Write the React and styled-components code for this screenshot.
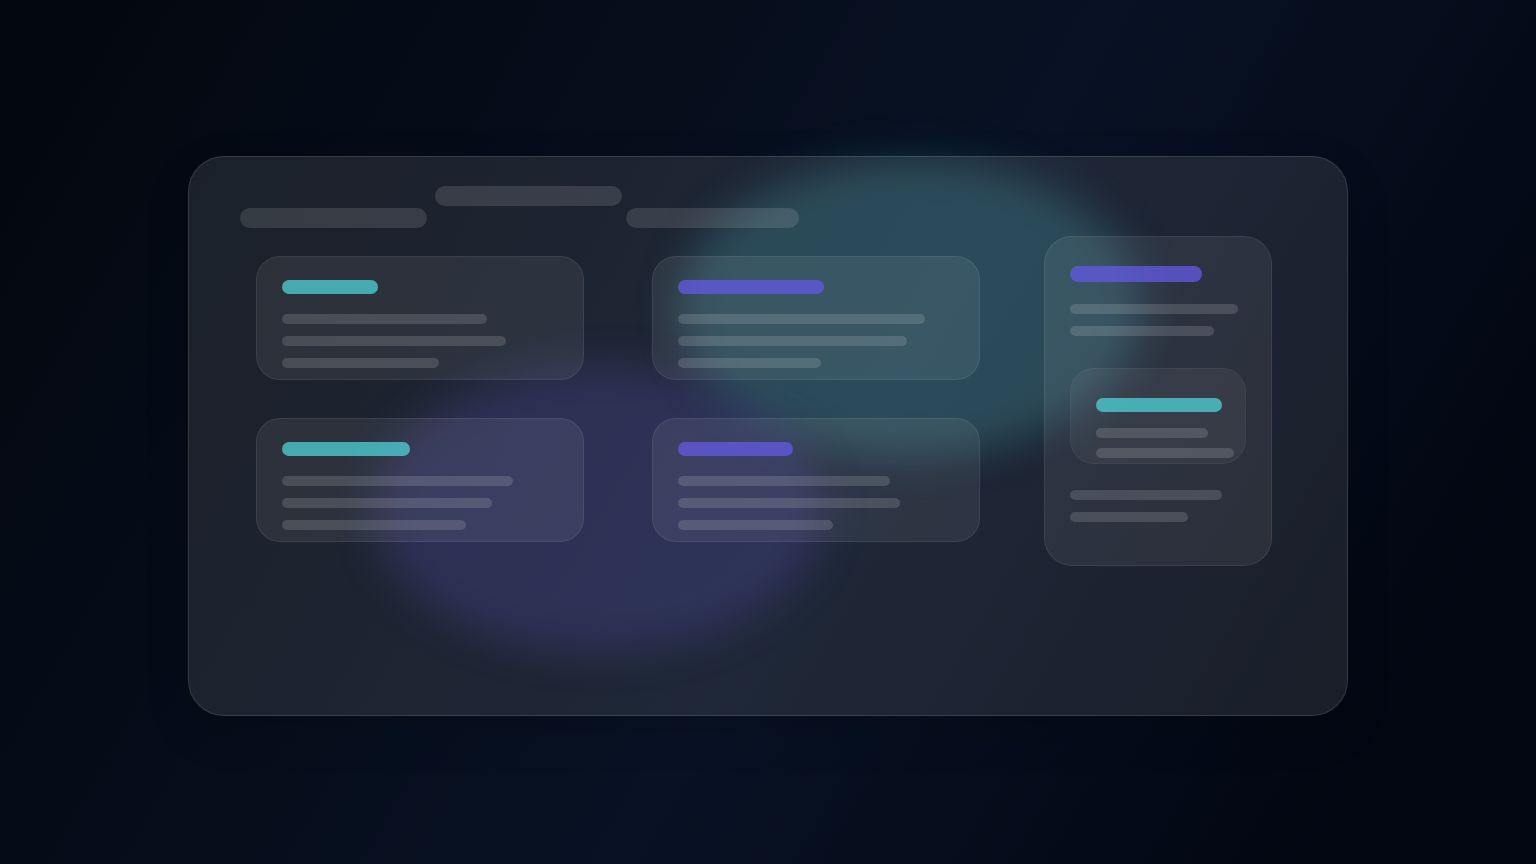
import React from 'react';
import styled, { createGlobalStyle } from 'styled-components';

const GlobalStyle = createGlobalStyle`
  * {
    box-sizing: border-box;
  }

  body {
    margin: 0;
    background: #020611;
  }
`;

const TEAL = 'rgba(78, 205, 210, 0.78)';
const INDIGO = 'rgba(99, 90, 228, 0.76)';

const Page = styled.main`
  position: relative;
  display: flex;
  justify-content: center;
  min-height: 100vh;
  padding: 156px 188px 148px;
  overflow: hidden;
  background: linear-gradient(120deg, #03070e 0%, #081224 55%, #020611 90%);
`;

const Glow = styled.div`
  position: absolute;
  border-radius: 50%;
  filter: blur(20px);
`;

const TealGlow = styled(Glow)`
  top: 160px;
  left: calc(50% - 90px);
  width: 464px;
  height: 296px;
  background: rgba(56, 150, 162, 0.3);
`;

const IndigoGlow = styled(Glow)`
  top: 366px;
  left: calc(50% - 396px);
  width: 452px;
  height: 286px;
  background: rgba(80, 72, 190, 0.24);
`;

const Shell = styled.section`
  position: relative;
  display: flex;
  justify-content: space-between;
  align-items: flex-start;
  flex: 1;
  max-width: 1160px;
  min-height: 560px;
  padding: 29px 75px 29px 51px;
  border: 1px solid rgba(255, 255, 255, 0.12);
  border-radius: 36px;
  background: rgba(255, 255, 255, 0.094);
  box-shadow: 0 16px 48px rgba(0, 0, 0, 0.12);
`;

const Content = styled.div`
  width: 740px;
`;

const Tabs = styled.nav`
  display: flex;
  height: 42px;
`;

const Tab = styled.span`
  width: ${props => props.$width}px;
  height: 20px;
  margin-right: ${props => props.$gap || 0}px;
  align-self: ${props => (props.$raised ? 'flex-start' : 'flex-end')};
  border-radius: 10px;
  background: rgba(255, 255, 255, 0.12);
`;

const Grid = styled.div`
  display: grid;
  grid-template-columns: 328px 328px;
  gap: 38px 68px;
  padding: 28px 0 0 16px;
`;

const Panel = styled.article`
  display: flex;
  flex-direction: column;
  align-items: flex-start;
  border: 1px solid rgba(255, 255, 255, 0.08);
  background: rgba(255, 255, 255, 0.07);
`;

const Card = styled(Panel)`
  gap: 12px;
  height: 124px;
  padding: 23px 25px;
  border-radius: 24px;
`;

const Sidebar = styled(Panel)`
  gap: 12px;
  width: 228px;
  height: 330px;
  margin-top: 50px;
  padding: 29px 25px;
  border-radius: 28px;
`;

const Inset = styled(Panel)`
  gap: 10px;
  width: 176px;
  height: 96px;
  margin: 20px 0 14px;
  padding: 29px 25px;
  border-color: rgba(255, 255, 255, 0.04);
  border-radius: 24px;
  background: rgba(255, 255, 255, 0.05);
`;

const Heading = styled.div`
  flex-shrink: 0;
  width: ${props => props.$width}px;
  height: ${props => (props.$large ? 16 : 14)}px;
  margin-bottom: ${props => props.$gap}px;
  border-radius: 8px;
  background: ${props => props.$color};
`;

const Line = styled.div`
  flex-shrink: 0;
  width: ${props => props.$width}px;
  height: 10px;
  border-radius: 5px;
  background: rgba(255, 255, 255, 0.14);
`;

const cards = [
  { color: TEAL, heading: 96, lines: [205, 224, 157] },
  { color: INDIGO, heading: 146, lines: [247, 229, 143] },
  { color: TEAL, heading: 128, lines: [231, 210, 184] },
  { color: INDIGO, heading: 115, lines: [212, 222, 155] },
];

const Lines = ({ widths }) =>
  widths.map((width, index) => <Line key={index} $width={width} />);

const App = () => (
  <>
    <GlobalStyle />
    <Page>
      <TealGlow />
      <IndigoGlow />
      <Shell>
        <Content>
          <Tabs>
            <Tab $width={187} $gap={8} />
            <Tab $width={187} $gap={4} $raised />
            <Tab $width={173} />
          </Tabs>
          <Grid>
            {cards.map(({ color, heading, lines }, index) => (
              <Card key={index}>
                <Heading $width={heading} $color={color} $gap={8} />
                <Lines widths={lines} />
              </Card>
            ))}
          </Grid>
        </Content>
        <Sidebar>
          <Heading $width={132} $color={INDIGO} $gap={10} $large />
          <Lines widths={[168, 144]} />
          <Inset>
            <Heading $width={126} $color={TEAL} $gap={6} />
            <Lines widths={[112, 138]} />
          </Inset>
          <Lines widths={[152, 118]} />
        </Sidebar>
      </Shell>
    </Page>
  </>
);

export default App;
